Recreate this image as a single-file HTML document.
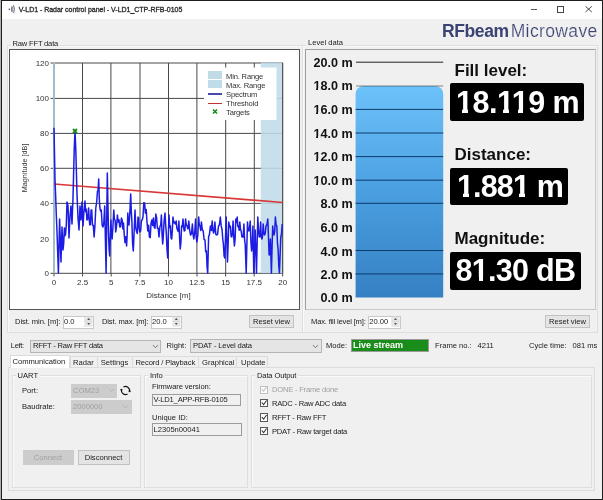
<!DOCTYPE html>
<html><head><meta charset="utf-8">
<style>
*{box-sizing:border-box;margin:0;padding:0}
html,body{width:603px;height:500px;overflow:hidden;background:#f0f0f0;font-family:"Liberation Sans",sans-serif;color:#1a1a1a}
.a{position:absolute;white-space:nowrap}
.t{font-size:7.6px;line-height:10px}
.gb{position:absolute;border:1px solid #dedede;box-shadow:inset 1px 1px 0 #fafafa}
.spin{position:absolute;background:#fff;border:1px solid #c8c8c8}
.btn{position:absolute;background:#e4e4e4;border:1px solid #c2c2c2;font-size:7.6px;text-align:center}
.combo{position:absolute;background:#e5e5e5;border:1px solid #b5b5b5;font-size:8px}
.chk{position:absolute;width:8.3px;height:8.3px;border:1px solid #5a5a5a;background:#fff}
</style></head><body><div style="position:absolute;left:0;top:0;width:603px;height:500px;will-change:transform">
<!-- window frame -->
<div class="a" style="left:0;top:0;width:1px;height:500px;background:#a9b1b1"></div><div class="a" style="left:1px;top:0;width:602px;height:500px;border:1px solid #1e1e1e;border-left-width:1px"></div>
<div class="a" style="left:2px;top:1px;width:600px;height:17.5px;background:#fff"></div>
<svg class="a" style="left:7.5px;top:4px" width="9" height="10" viewBox="0 0 9 10"><circle cx="1.3" cy="5.2" r="0.75" fill="#333"/><path d="M4,2.2 Q2.8,5.2 4,8.2 M5.5,1.2 Q7.6,5.2 5.5,9.2 M4.8,3 V7.5" stroke="#667" stroke-width="0.9" fill="none"/></svg>
<div class="a" style="left:18.7px;top:5px;font-size:7px;line-height:10px;color:#2a2a2a;letter-spacing:-0.02px;-webkit-text-stroke:0.3px #2a2a2a">V-LD1 - Radar control panel - V-LD1_CTP-RFB-0105</div>
<div class="a" style="left:530.5px;top:9px;width:6.5px;height:1px;background:#555"></div>
<div class="a" style="left:557.3px;top:6.3px;width:6.8px;height:6.3px;border:0.9px solid #444"></div>
<svg class="a" style="left:585px;top:6px" width="8" height="7"><path d="M0.5,0.3 L6.8,6 M6.8,0.3 L0.5,6" stroke="#333" stroke-width="0.9"/></svg>

<!-- logo -->
<div class="a" style="left:442px;top:19.8px;font-size:17.5px;line-height:22px;color:#3b4373;letter-spacing:-0.4px"><b>RFbeam</b><span style="font-weight:400;letter-spacing:0.38px;margin-left:2px;-webkit-text-stroke:0.2px #f0f0f0">Microwave</span></div>

<!-- left group -->
<div class="gb" style="left:7px;top:45px;width:296px;height:288px"></div>
<div class="a t" style="left:10.5px;top:38.5px;background:#f0f0f0;padding:0 2px;letter-spacing:-0.2px">Raw FFT data</div>
<div class="a" style="left:9px;top:49px;width:291px;height:261px;background:#fff;border:1px solid #555"></div>

<svg class="a" style="left:0;top:0" width="603" height="500">
 <!-- band max range -->
 <!-- grid -->
 <g stroke="#484848" stroke-width="1" fill="none">
  <path d="M54,63H282.7 M54,98.4H282.7 M54,133.4H282.7 M54,168.3H282.7 M54,203.4H282.7"/>
  <path d="M82.5,63V273.3 M110.9,63V273.3 M140,63V273.3 M168.5,63V273.3 M196.9,63V273.3 M225.7,63V273.3 M254.3,63V273.3 M282.7,63V273.3"/>
  <path d="M50.5,63H54 M50.5,98.4H54 M50.5,133.4H54 M50.5,168.3H54 M50.5,203.4H54 M50.5,273.3H282.7"/>
  <path d="M54,273.3V276.5 M82.6,273.3V276.5 M111.2,273.3V276.5 M139.8,273.3V276.5 M168.4,273.3V276.5 M197,273.3V276.5 M225.6,273.3V276.5 M254.2,273.3V276.5 M282.7,273.3V276.5"/>
 </g>
 <rect x="260.8" y="62.5" width="21.6" height="210.6" fill="#c0dce8" fill-opacity="0.88"/>
 <rect x="53" y="62.5" width="2" height="210.6" fill="#c0dce8" fill-opacity="0.88"/>
 <path d="M54,62.8V273.3" stroke="#8aa4b4" stroke-width="1.2"/>
 <path d="M282.6,62.5V273.3" stroke="#505050" stroke-width="1"/>
 <!-- legend -->
 <rect x="204" y="67.5" width="72.5" height="52.5" fill="#fff"/>
 <rect x="208" y="71" width="14" height="8" fill="#c0dce8"/>
 <rect x="208" y="80" width="14" height="8" fill="#c0dce8"/>
 <path d="M208,94H222" stroke="#1a1a9a" stroke-width="1.6"/>
 <path d="M208,103.5H222" stroke="#c83030" stroke-width="1"/>
 <path d="M213,109.5L217,113.5M217,109.5L213,113.5" stroke="#1a8a1a" stroke-width="1.6"/>
 <g font-family="Liberation Sans" font-size="7.6" fill="#333" letter-spacing="-0.17">
  <text x="226" y="78.8">Min. Range</text>
  <text x="226" y="87.8">Max. Range</text>
  <text x="226" y="96.8">Spectrum</text>
  <text x="226" y="105.8">Threshold</text>
  <text x="226" y="114.8">Targets</text>
 </g>
 <!-- threshold -->
 <path d="M54,184L282.7,202.5" stroke="#d83838" stroke-width="1.7"/>
 <!-- spectrum -->
 <polyline points="54.0,127.7 55.0,180.0 55.7,197.3 56.3,214.7 57.0,232.0 57.7,252.5 58.4,273.0 59.0,246.0 59.6,219.0 60.3,240.5 61.0,262.0 62.0,227.0 63.0,250.0 63.7,243.3 64.4,228.0 65.0,235.8 65.6,234.0 66.3,224.6 67.0,202.0 68.0,206.0 69.0,238.0 70.0,216.0 71.0,206.0 72.0,224.0 73.0,198.0 73.6,174.0 74.2,150.0 75.0,131.0 75.8,150.0 76.4,172.0 77.0,194.0 78.0,218.0 79.0,230.0 80.0,206.0 81.0,220.0 82.0,202.0 83.0,226.0 84.0,210.0 85.0,201.0 85.6,211.7 86.3,209.1 86.9,220.0 87.8,218.9 88.6,208.0 89.2,219.4 89.8,225.0 90.4,224.6 91.1,209.9 91.7,210.0 92.5,225.0 93.3,225.5 94.1,237.0 94.9,226.0 95.8,208.0 96.7,202.0 97.5,191.0 98.1,191.0 98.7,179.0 99.3,199.0 99.9,208.0 100.6,211.2 101.3,210.0 102.2,225.4 103.0,227.0 103.8,223.3 104.7,206.0 105.4,239.5 106.1,273.0 106.7,223.0 107.3,173.0 107.9,202.5 108.5,232.0 109.1,249.3 109.7,256.0 110.3,238.0 110.9,220.0 111.5,234.6 112.1,239.0 112.9,227.3 113.8,210.0 114.4,219.4 115.1,220.0 115.7,232.0 116.6,225.8 117.4,215.0 118.2,222.0 119.0,219.8 119.8,227.0 120.6,226.8 121.4,218.0 122.2,220.0 122.9,228.9 123.5,223.1 124.2,234.0 125.0,242.6 125.8,236.8 126.6,246.0 127.2,234.0 127.8,213.0 128.4,224.3 129.0,225.0 129.8,213.8 130.7,194.0 131.3,211.4 131.9,222.0 132.6,243.5 133.3,251.0 134.2,230.5 135.0,210.0 135.8,228.0 136.7,232.0 137.3,233.5 138.0,217.1 138.6,218.0 139.2,228.6 139.8,232.0 140.6,231.1 141.4,220.6 142.2,220.0 143.0,216.7 143.8,202.8 144.6,203.0 145.4,213.3 146.2,209.4 147.0,222.0 147.8,230.9 148.6,225.2 149.4,237.0 150.2,237.6 151.0,223.7 151.8,220.0 152.6,225.4 153.4,218.1 154.2,227.0 155.0,228.3 155.8,214.1 156.6,218.0 157.4,228.3 158.2,228.3 159.0,237.0 160.0,226.0 160.7,225.6 161.4,215.0 162.1,235.4 162.7,244.0 163.3,236.3 164.0,222.0 165.0,213.0 165.7,225.4 166.3,233.0 167.0,249.2 167.7,258.0 168.3,236.5 169.0,215.0 169.7,227.3 170.4,226.0 171.1,238.3 171.7,239.0 172.3,230.6 173.0,217.0 173.7,222.7 174.4,222.0 175.3,224.0 176.2,221.0 176.8,227.8 177.5,230.0 178.2,231.5 178.9,221.0 179.6,237.9 180.2,249.0 180.9,242.3 181.6,226.0 182.3,226.7 183.0,219.0 183.7,228.0 184.3,231.0 184.9,230.7 185.6,219.0 186.3,225.2 187.0,226.0 187.9,228.7 188.8,221.0 189.7,230.6 190.6,235.0 191.5,233.6 192.4,224.0 193.1,234.6 193.8,239.0 194.7,232.3 195.6,219.0 196.2,237.4 196.9,242.0 197.8,235.5 198.7,217.0 199.3,225.0 200.0,226.0 200.7,230.4 201.4,222.0 202.3,229.6 203.2,231.0 204.1,239.5 205.0,240.0 205.7,251.8 206.4,251.0 207.1,267.2 207.7,273.0 208.6,237.0 209.5,234.0 210.4,226.0 211.3,230.4 212.2,221.0 212.9,230.1 213.6,233.0 214.2,230.8 214.9,222.0 215.8,234.4 216.7,235.0 217.6,234.1 218.5,226.0 219.4,225.0 220.3,217.0 221.2,225.9 222.1,230.0 222.8,239.5 223.4,244.0 224.1,255.9 224.8,258.0 225.5,237.5 226.2,217.0 226.8,239.5 227.5,262.0 228.2,242.0 228.8,222.0 229.6,227.2 230.4,226.0 231.1,236.5 231.8,237.0 232.4,232.9 233.1,221.0 233.8,237.8 234.4,246.0 235.1,239.3 235.8,219.0 236.5,222.4 237.2,217.0 237.8,226.4 238.5,226.0 239.2,230.3 239.8,222.0 240.5,229.4 241.2,231.0 241.9,236.8 242.6,237.0 243.2,237.0 243.9,224.0 244.6,240.1 245.2,244.0 246.2,273.0 246.8,247.5 247.5,222.0 248.2,229.7 248.8,231.0 249.5,228.9 250.2,221.0 250.9,241.7 251.6,251.0 252.2,245.2 252.9,226.0 253.8,273.0 254.5,251.5 255.2,230.0 255.8,251.5 256.5,273.0 257.1,245.0 257.8,217.0 258.5,230.0 259.2,237.0 259.9,236.3 260.6,222.0 261.2,236.9 261.9,239.0 262.5,236.5 263.2,224.0 263.9,233.6 264.6,235.0 265.3,233.0 266.0,226.0 266.9,224.7 267.8,219.0 268.5,237.0 269.1,255.0 269.8,253.8 270.4,239.0 271.4,273.0 272.0,249.5 272.7,226.0 273.4,233.7 274.0,235.0 274.7,231.5 275.4,217.0 276.1,224.8 276.8,226.0 277.5,243.6 278.1,249.0 278.8,266.0 279.4,273.0 280.1,255.0 280.8,237.0 281.5,234.0 282.2,224.0" fill="none" stroke="#1c1ce4" stroke-width="1.5" stroke-linejoin="round"/>
 <path d="M73,129L77,133M77,129L73,133" stroke="#1a8a1a" stroke-width="1.8"/>
 <!-- axis labels -->
 <g font-family="Liberation Sans" font-size="8" fill="#333" text-anchor="end">
  <text x="49" y="65.8">120</text><text x="49" y="101">100</text><text x="49" y="136.2">80</text><text x="49" y="171.3">60</text><text x="49" y="206.4">40</text><text x="49" y="241.5">20</text><text x="49" y="276.3">0</text>
 </g>
 <g font-family="Liberation Sans" font-size="8" fill="#333" text-anchor="middle">
  <text x="54" y="284.8">0</text><text x="82.6" y="284.8">2.5</text><text x="111.2" y="284.8">5</text><text x="139.8" y="284.8">7.5</text><text x="168.4" y="284.8">10</text><text x="197" y="284.8">12.5</text><text x="225.6" y="284.8">15</text><text x="254.2" y="284.8">17.5</text><text x="282.7" y="284.8">20</text>
  <text x="168.4" y="298">Distance [m]</text>
 </g>
 <text transform="translate(26.8,168) rotate(-90)" font-family="Liberation Sans" font-size="7.2" fill="#333" text-anchor="middle">Magnitude [dB]</text>

 <!-- level tank -->
 <defs><linearGradient id="tg" x1="0" y1="0" x2="0" y2="1"><stop offset="0" stop-color="#6ec2fa"/><stop offset="0.5" stop-color="#4a9fe0"/><stop offset="1" stop-color="#3580c2"/></linearGradient></defs>
 <path d="M356,62.2H443.2" stroke="#222" stroke-width="1"/>
 <path d="M355.6,297.6V94A8,8 0 0 1 363.6,86H435.2A8,8 0 0 1 443.2,94V297.6Z" fill="url(#tg)"/>
 <path d="M356,86H443.2" stroke="rgba(40,40,40,0.55)" stroke-width="1"/>
 <g stroke="#0c3a6c" stroke-width="1">
  <path d="M355.6,109.4H443.2 M355.6,133H443.2 M355.6,156.6H443.2 M355.6,180.2H443.2 M355.6,203.3H443.2 M355.6,250.5H443.2 M355.6,273.9H443.2"/>
 </g>
 <g font-family="Liberation Sans" font-size="12.6" font-weight="bold" fill="#111" text-anchor="end" transform="translate(0.6,0)">
  <text x="352" y="66.7">20.0 m</text><text x="352" y="90.3">18.0 m</text><text x="352" y="113.9">16.0 m</text><text x="352" y="137.5">14.0 m</text><text x="352" y="161.1">12.0 m</text><text x="352" y="184.7">10.0 m</text><text x="352" y="208.3">8.0 m</text><text x="352" y="231.9">6.0 m</text><text x="352" y="255.5">4.0 m</text><text x="352" y="279.1">2.0 m</text><text x="352" y="302.2">0.0 m</text>
 </g>
</svg>

<!-- right group -->
<div class="gb" style="left:302px;top:45px;width:296px;height:288px"></div>
<div class="a t" style="left:306px;top:38px;background:#f0f0f0;padding:0 2px">Level data</div>
<div class="a" style="left:305px;top:49px;width:291px;height:261px;border:1px solid #a0a0a0;border-right-color:#c8c8c8;border-bottom-color:#c8c8c8"></div>

<div class="a" style="left:454.5px;top:61.2px;font-size:17px;line-height:20px;font-weight:bold;color:#111">Fill level:</div>
<div class="a" style="left:450px;top:83px;width:134px;height:38px;background:#000;border-radius:2px"></div>
<div class="a" style="left:456px;top:84px;font-size:30.5px;line-height:36px;font-weight:bold;color:#fff;letter-spacing:-0.5px">18.119 m</div>
<div class="a" style="left:454.5px;top:145.2px;font-size:17px;line-height:20px;font-weight:bold;color:#111">Distance:</div>
<div class="a" style="left:450px;top:167.5px;width:118px;height:37px;background:#000;border-radius:2px"></div>
<div class="a" style="left:457px;top:168px;font-size:30.5px;line-height:36px;font-weight:bold;color:#fff;letter-spacing:-0.85px">1.881 m</div>
<div class="a" style="left:454.5px;top:229.2px;font-size:17px;line-height:20px;font-weight:bold;color:#111">Magnitude:</div>
<div class="a" style="left:450px;top:252px;width:131px;height:38px;background:#000;border-radius:2px"></div>
<div class="a" style="left:455.5px;top:251.5px;font-size:30.5px;line-height:36px;font-weight:bold;color:#fff;letter-spacing:-0.7px">81.30 dB</div>


<!-- hide feet of digit 1 -->
<div class="a" style="left:457px;top:109px;width:5px;height:4px;background:#000"></div><div class="a" style="left:468px;top:109px;width:5px;height:4px;background:#000"></div><div class="a" style="left:498px;top:109px;width:5px;height:4px;background:#000"></div><div class="a" style="left:509px;top:109px;width:9px;height:4px;background:#000"></div><div class="a" style="left:523px;top:109px;width:6px;height:4px;background:#000"></div><div class="a" style="left:458px;top:193px;width:5px;height:4px;background:#000"></div><div class="a" style="left:469px;top:193px;width:5px;height:4px;background:#000"></div><div class="a" style="left:513px;top:193px;width:6px;height:4px;background:#000"></div><div class="a" style="left:525px;top:193px;width:5px;height:4px;background:#000"></div><div class="a" style="left:472px;top:277px;width:7px;height:4px;background:#000"></div><div class="a" style="left:483px;top:277px;width:6px;height:4px;background:#000"></div>
<div class="a" style="left:314px;top:88px;width:2px;height:2px;background:#f0f0f0"></div><div class="a" style="left:318px;top:88px;width:2px;height:2px;background:#f0f0f0"></div><div class="a" style="left:314px;top:112px;width:2px;height:2px;background:#f0f0f0"></div><div class="a" style="left:318px;top:112px;width:2px;height:2px;background:#f0f0f0"></div><div class="a" style="left:314px;top:136px;width:2px;height:2px;background:#f0f0f0"></div><div class="a" style="left:318px;top:136px;width:2px;height:2px;background:#f0f0f0"></div><div class="a" style="left:314px;top:159px;width:2px;height:2px;background:#f0f0f0"></div><div class="a" style="left:318px;top:159px;width:2px;height:2px;background:#f0f0f0"></div><div class="a" style="left:314px;top:183px;width:2px;height:2px;background:#f0f0f0"></div><div class="a" style="left:318px;top:183px;width:2px;height:2px;background:#f0f0f0"></div>
<!-- controls row under charts -->
<div class="a t" style="left:15px;top:317.3px;letter-spacing:-0.08px">Dist. min. [m]:</div>
<div class="spin" style="left:62.7px;top:316px;width:31.5px;height:12.5px"></div>
<div class="a t" style="left:64px;top:317.3px">0.0</div>
<div class="a t" style="left:102px;top:317.3px;letter-spacing:-0.15px">Dist. max. [m]:</div>
<div class="spin" style="left:150.6px;top:316px;width:31px;height:12.5px"></div>
<div class="a t" style="left:152px;top:317.3px">20.0</div>
<div class="btn" style="left:249px;top:315px;width:45px;height:13px;line-height:11px">Reset view</div>
<div class="a t" style="left:311px;top:317.3px;letter-spacing:-0.18px">Max. fill level [m]:</div>
<div class="spin" style="left:368px;top:316px;width:33px;height:12.5px"></div>
<div class="a t" style="left:369.3px;top:317.3px">20.00</div>
<div class="btn" style="left:545px;top:315px;width:45px;height:13px;line-height:11px">Reset view</div>

<!-- row 2 -->
<div class="a t" style="left:10.8px;top:340.7px;letter-spacing:-0.35px">Left:</div>
<div class="combo" style="left:30px;top:339.5px;width:131px;height:13px"></div>
<div class="a t" style="left:33px;top:341.3px;letter-spacing:-0.22px">RFFT - Raw FFT data</div>
<div class="a t" style="left:166.5px;top:340.7px">Right:</div>
<div class="combo" style="left:190px;top:339px;width:132px;height:13.5px"></div>
<div class="a t" style="left:193px;top:341.3px;letter-spacing:-0.15px">PDAT - Level data</div>
<div class="a t" style="left:326px;top:340.7px">Mode:</div>
<div class="a" style="left:351px;top:338.5px;width:78px;height:13px;background:#1a8c1a;border:1px solid #9a9a9a"></div>
<div class="a" style="left:353px;top:339px;font-size:9px;line-height:12px;font-weight:bold;color:#fff">Live stream</div>
<div class="a t" style="left:435px;top:340.7px">Frame no.:</div>
<div class="a t" style="left:477.5px;top:340.7px">4211</div>
<div class="a t" style="left:529px;top:340.7px">Cycle time:</div>
<div class="a t" style="left:572.5px;top:340.7px">081 ms</div>

<!-- tabs -->
<div class="a" style="left:8px;top:367px;width:587px;height:124px;border:1px solid #dcdcdc;background:#f0f0f0"></div>
<div class="a" style="left:10px;top:354.5px;width:60px;height:13.5px;background:#fff;border:1px solid #dcdcdc;border-bottom:none"></div>
<div class="a" style="left:70px;top:356px;width:28px;height:11.5px;border:1px solid #dcdcdc;border-bottom:none"></div>
<div class="a" style="left:97px;top:356px;width:36px;height:11.5px;border:1px solid #dcdcdc;border-bottom:none"></div>
<div class="a" style="left:132px;top:356px;width:67px;height:11.5px;border:1px solid #dcdcdc;border-bottom:none"></div>
<div class="a" style="left:198px;top:356px;width:39px;height:11.5px;border:1px solid #dcdcdc;border-bottom:none"></div>
<div class="a" style="left:236px;top:356px;width:32px;height:11.5px;border:1px solid #dcdcdc;border-bottom:none"></div>
<div class="a t" style="left:12.5px;top:356.5px">Communication</div>
<div class="a t" style="left:73px;top:357.5px">Radar</div>
<div class="a t" style="left:100.8px;top:357.5px">Settings</div>
<div class="a t" style="left:135.5px;top:357.5px;letter-spacing:-0.12px">Record / Playback</div>
<div class="a t" style="left:202px;top:357.5px">Graphical</div>
<div class="a t" style="left:241px;top:357.5px">Update</div>

<!-- UART -->
<div class="gb" style="left:12px;top:374.5px;width:129px;height:113.5px"></div>
<div class="a t" style="left:15.5px;top:370.5px;background:#f0f0f0;padding:0 2px">UART</div>
<div class="a t" style="left:22px;top:385.7px">Port:</div>
<div class="a t" style="left:22px;top:401.8px">Baudrate:</div>
<div class="combo" style="left:71px;top:384px;width:46px;height:13.5px;background:#cccccc;border-color:#cccccc"></div>
<div class="a t" style="left:73px;top:386px;color:#a0a0a0">COM23</div>
<div class="combo" style="left:71px;top:400px;width:60.5px;height:14px;background:#cccccc;border-color:#cccccc"></div>
<div class="a t" style="left:73px;top:402px;color:#a0a0a0">2000000</div>
<svg class="a" style="left:116px;top:382px" width="20" height="18" viewBox="0 0 20 18"><path d="M7.45,4.95A4.1,4.1 0 0 1 13.54,9.21 M11.55,12.05A4.1,4.1 0 0 1 5.46,7.79" stroke="#111" stroke-width="1.2" fill="none"/><circle cx="13.6" cy="9.3" r="1.05" fill="#111"/><circle cx="5.4" cy="7.7" r="1.05" fill="#111"/></svg>
<div class="btn" style="left:22.5px;top:449.5px;width:51px;height:15px;line-height:13px;background:#cccccc;border-color:#cccccc;color:#a0a0a0">Connect</div>
<div class="btn" style="left:77.5px;top:449.5px;width:52px;height:15px;line-height:13px">Disconnect</div>

<!-- Info -->
<div class="gb" style="left:143.8px;top:374.5px;width:104px;height:113.5px"></div>
<div class="a t" style="left:148px;top:370.5px;background:#f0f0f0;padding:0 2px">Info</div>
<div class="a t" style="left:152px;top:381.5px;letter-spacing:-0.1px">Firmware version:</div>
<div class="a" style="left:152px;top:393.5px;width:89px;height:12.5px;border:1px solid #9c9c9c;background:#f0f0f0"></div>
<div class="a t" style="left:153.5px;top:395px;letter-spacing:-0.2px">V-LD1_APP-RFB-0105</div>
<div class="a t" style="left:152px;top:412.5px">Unique ID:</div>
<div class="a" style="left:152px;top:423px;width:90px;height:13px;border:1px solid #9c9c9c;background:#f0f0f0"></div>
<div class="a t" style="left:153.5px;top:425px">L2305n00041</div>

<!-- Data output -->
<div class="gb" style="left:251.2px;top:374.5px;width:340.8px;height:113.5px"></div>
<div class="a t" style="left:255px;top:370.5px;background:#f0f0f0;padding:0 2px;letter-spacing:-0.15px">Data Output</div>
<div class="chk" style="left:260.2px;top:385.5px;border-color:#c0c0c0"></div>
<div class="a t" style="left:272px;letter-spacing:-0.22px;top:385px;color:#a0a0a0">DONE - Frame done</div>
<div class="chk" style="left:260.2px;top:399px"></div>
<div class="a t" style="left:272px;letter-spacing:-0.22px;top:398.5px">RADC - Raw ADC data</div>
<div class="chk" style="left:260.2px;top:413.3px"></div>
<div class="a t" style="left:272px;letter-spacing:-0.22px;top:413px">RFFT - Raw FFT</div>
<div class="chk" style="left:260.2px;top:427px"></div>
<div class="a t" style="left:272px;letter-spacing:-0.22px;top:426.5px">PDAT - Raw target data</div>
<svg class="a" style="left:0;top:0" width="603" height="500">
 <g fill="none" stroke-width="1">
 <path d="M261.8,389L263.6,391.2L266.6,387" stroke="#c0c0c0" stroke-width="1.1"/>
 <path d="M261.8,402.5L263.6,404.7L266.6,400.5" stroke="#333" stroke-width="1.1"/>
 <path d="M261.8,417L263.6,419.2L266.6,415" stroke="#333" stroke-width="1.1"/>
 <path d="M261.8,430.5L263.6,432.7L266.6,428.5" stroke="#333" stroke-width="1.1"/>
 </g>
</svg>

<!-- spin buttons & chevrons -->
<svg class="a" style="left:0;top:0" width="603" height="500">
 <g fill="#e6e6e6"><rect x="84.2" y="316.8" width="8.3" height="10"/><rect x="172.4" y="316.8" width="8" height="10"/><rect x="391.3" y="316.8" width="8.3" height="10"/></g>
 <g stroke="#d0d0d0" stroke-width="0.6"><path d="M84.2,321.3H92.5 M172.4,321.3H180.4 M391.3,321.3H399.6"/></g>
 <g fill="#222">
  <path d="M87.2,319.8L88.7,318.2L90.2,319.8Z M87.2,323.2L88.7,324.8L90.2,323.2Z"/>
  <path d="M174.8,319.8L176.3,318.2L177.8,319.8Z M174.8,323.2L176.3,324.8L177.8,323.2Z"/>
  <path d="M394,319.8L395.5,318.2L397,319.8Z M394,323.2L395.5,324.8L397,323.2Z"/>
 </g>
 <g stroke="#555" stroke-width="0.8" fill="none">
  <path d="M153,345.2L155.5,347.7L158,345.2"/>
  <path d="M313,345.2L315.5,347.7L318,345.2"/>
  <path d="M109,389L111.5,391.5L114,389" stroke="#b0b0b0"/>
  <path d="M123,405.5L125.5,408L128,405.5" stroke="#b0b0b0"/>
 </g>
</svg>
</div></body></html>
